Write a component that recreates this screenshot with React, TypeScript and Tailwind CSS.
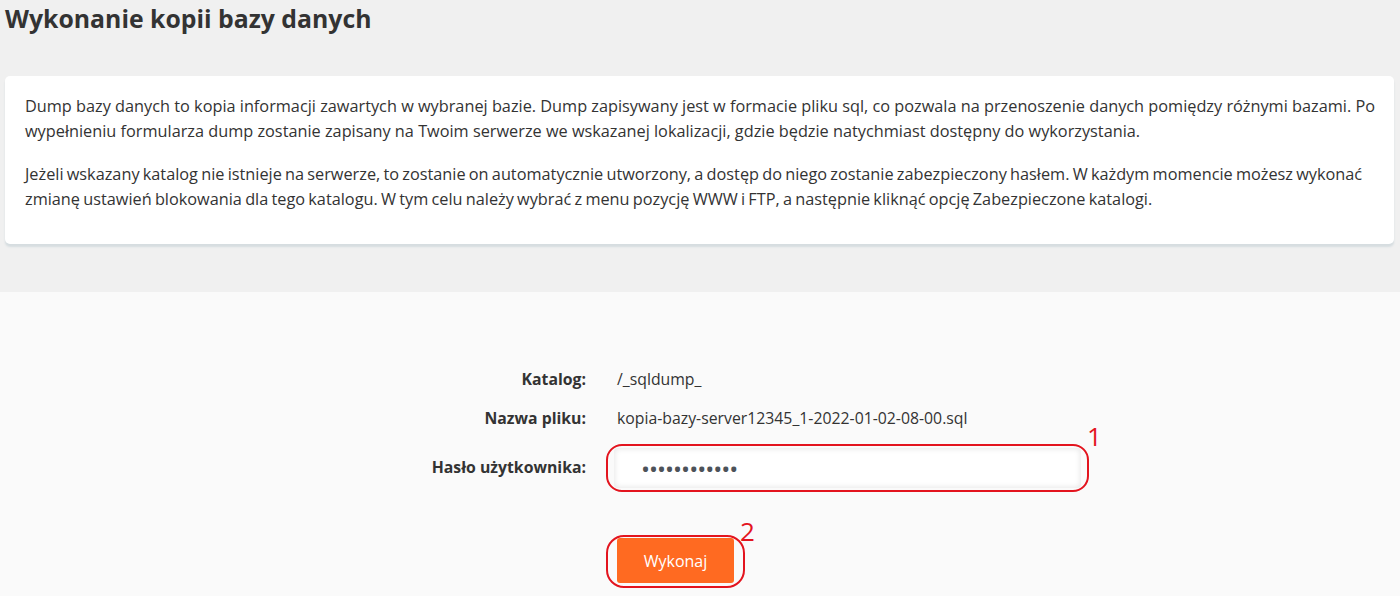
export default function App() {
  return (
    <div className="min-h-[596px] font-['Open_Sans',sans-serif] text-[#333]">
      <section className="bg-[#f0f0f0] h-[292px] pt-[1px]">
        <h1 className="px-[5px] text-[24.8px] font-bold leading-[34px] text-[#333]">Wykonanie kopii bazy danych</h1>
        <div className="mt-[41px] ml-[5px] mr-[6px] bg-white rounded-[5px] shadow-[0_3px_2px_#d6dde0] pl-[20px] pr-[9px] pt-[18px] pb-[33px] text-[16.3px] leading-[24.5px] text-[#333]">
          <p>
            Dump bazy danych to kopia informacji zawartych w wybranej bazie. Dump zapisywany jest w formacie pliku sql, co pozwala na przenoszenie danych pomiędzy różnymi bazami. Po wypełnieniu formularza dump zostanie zapisany na Twoim serwerze we wskazanej lokalizacji, gdzie będzie natychmiast dostępny do wykorzystania.
          </p>
          <p className="mt-[19px] [word-spacing:-1px]">
            Jeżeli wskazany katalog nie istnieje na serwerze, to zostanie on automatycznie utworzony, a dostęp do niego zostanie zabezpieczony hasłem. W każdym momencie możesz wykonać zmianę ustawień blokowania dla tego katalogu. W tym celu należy wybrać z menu pozycję WWW i FTP, a następnie kliknąć opcję Zabezpieczone katalogi.
          </p>
        </div>
      </section>

      <section className="bg-[#fafafa] h-[304px] pt-[76px] text-[15.8px]">
        <div className="flex items-center h-[24px]">
          <div className="w-[586px] text-right font-bold">Katalog:</div>
          <div className="ml-[31px]">/_sqldump_</div>
        </div>
        <div className="flex items-center h-[24px] mt-[15px]">
          <div className="w-[586px] text-right font-bold">Nazwa pliku:</div>
          <div className="ml-[31px]">kopia-bazy-server12345_1-2022-01-02-08-00.sql</div>
        </div>
        <div className="flex items-center mt-[17px]">
          <div className="w-[586px] text-right font-bold">Hasło użytkownika:</div>
          <div className="relative ml-[28px]">
            <input
              type="password"
              defaultValue="haslo1234567"
              className="block w-[467px] h-[40px] bg-white rounded-[4px] shadow-[inset_0_0_6px_rgba(0,0,0,0.12)] pl-[27px] text-[24px] text-[#4d5259] tracking-[-1px] outline-none"
            />
            <div className="absolute -left-[8px] -right-[8px] -top-[4px] -bottom-[4px] border-2 border-[#e3141e] rounded-[16px] pointer-events-none" />
            <span className="absolute left-[473px] -top-[27px] text-[26px] leading-[30px] text-[#e3141e]">1</span>
          </div>
        </div>
        <div className="flex mt-[50px]">
          <div className="relative ml-[617px]">
            <button className="w-[117px] h-[45px] bg-[#ff6a21] rounded-[3px] text-white text-[16px]">Wykonaj</button>
            <div className="absolute -left-[11px] -right-[11px] -top-[3px] -bottom-[5px] border-2 border-[#e3141e] rounded-[18px] pointer-events-none" />
            <span className="absolute left-[123px] -top-[22px] text-[26px] leading-[30px] text-[#e3141e]">2</span>
          </div>
        </div>
      </section>
    </div>
  );
}
